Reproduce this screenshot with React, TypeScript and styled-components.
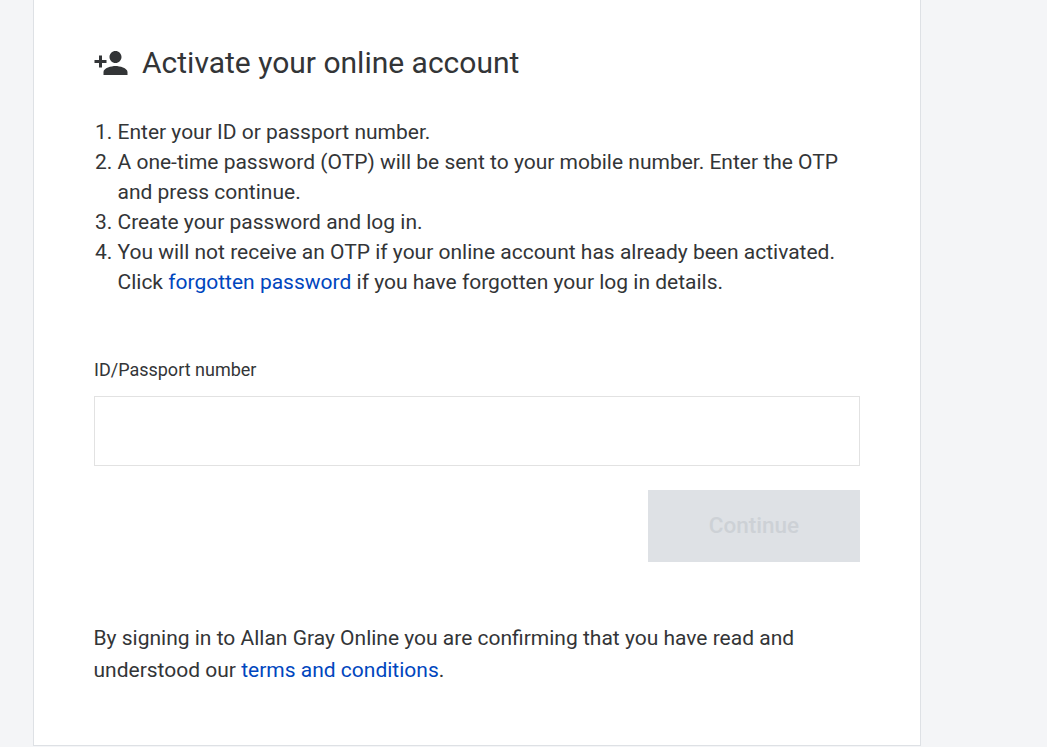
import React from 'react';
import styled, { createGlobalStyle } from 'styled-components';

const GlobalStyle = createGlobalStyle`
  html, body {
    margin: 0;
    padding: 0;
    height: 100%;
    overflow: hidden;
    background: #f4f5f7;
    font-family: Roboto, "Liberation Sans", sans-serif;
    color: #333537;
  }
`;

const Page = styled.div`
  width: 1047px;
  height: 747px;
  overflow: hidden;
  padding-left: 33px;
  box-sizing: border-box;
`;

const Card = styled.main`
  width: 888px;
  height: 746px;
  box-sizing: border-box;
  background: #fff;
  border: 1px solid #dee1e5;
  border-top: 0;
  padding: 42px 60px 0;
`;

const Heading = styled.h1`
  display: flex;
  align-items: center;
  gap: 13px;
  margin: 0 0 0 -1px;
  height: 42px;
  font-size: 30px;
  font-weight: 400;
  line-height: 42px;
`;

const Steps = styled.ol`
  margin: 33px 0 0;
  padding: 0 0 0 23.5px;
  font-size: 21px;
  line-height: 30px;
`;

const Link = styled.a`
  color: #0046be;
  text-decoration: none;
`;

const Label = styled.label`
  display: block;
  margin-top: 58px;
  font-size: 18px;
  line-height: 30px;
`;

const Input = styled.input`
  display: block;
  width: 766px;
  height: 70px;
  margin-top: 11px;
  box-sizing: border-box;
  border: 1px solid #e2e2e2;
  background: #fff;
  outline: none;
`;

const Actions = styled.div`
  display: flex;
  justify-content: flex-end;
  width: 766px;
  margin-top: 24px;
`;

const Button = styled.button`
  width: 212px;
  height: 72px;
  padding: 0 0 2px;
  border: 0;
  background: #dee1e5;
  color: #cdd1d6;
  font-family: inherit;
  font-size: 22.5px;
  font-weight: 500;
`;

const Terms = styled.p`
  margin: 60px 0 0 -0.5px;
  width: 766px;
  font-size: 21px;
  line-height: 32px;
`;

export default function App() {
  return (
    <>
      <GlobalStyle />
      <Page>
        <Card>
          <Heading>
            <svg width="36" height="36" viewBox="0 0 24 24" fill="#333537">
              <path d="M15 12c2.21 0 4-1.79 4-4s-1.79-4-4-4-4 1.79-4 4 1.79 4 4 4zm-9-2V7H4v3H1v2h3v3h2v-3h3v-2H6zm9 4c-2.67 0-8 1.34-8 4v2h16v-2c0-2.66-5.33-4-8-4z" />
            </svg>
            Activate your online account
          </Heading>
          <Steps>
            <li>Enter your ID or passport number.</li>
            <li>A one-time password (OTP) will be sent to your mobile number. Enter the OTP and press continue.</li>
            <li>Create your password and log in.</li>
            <li>
              You will not receive an OTP if your online account has already been activated.
              Click <Link href="#">forgotten password</Link> if you have forgotten your log in details.
            </li>
          </Steps>
          <Label htmlFor="id-number">ID/Passport number</Label>
          <Input id="id-number" />
          <Actions>
            <Button disabled>Continue</Button>
          </Actions>
          <Terms>
            By signing in to Allan Gray Online you are confirming that you have read and understood
            our <Link href="#">terms and conditions</Link>.
          </Terms>
        </Card>
      </Page>
    </>
  );
}
